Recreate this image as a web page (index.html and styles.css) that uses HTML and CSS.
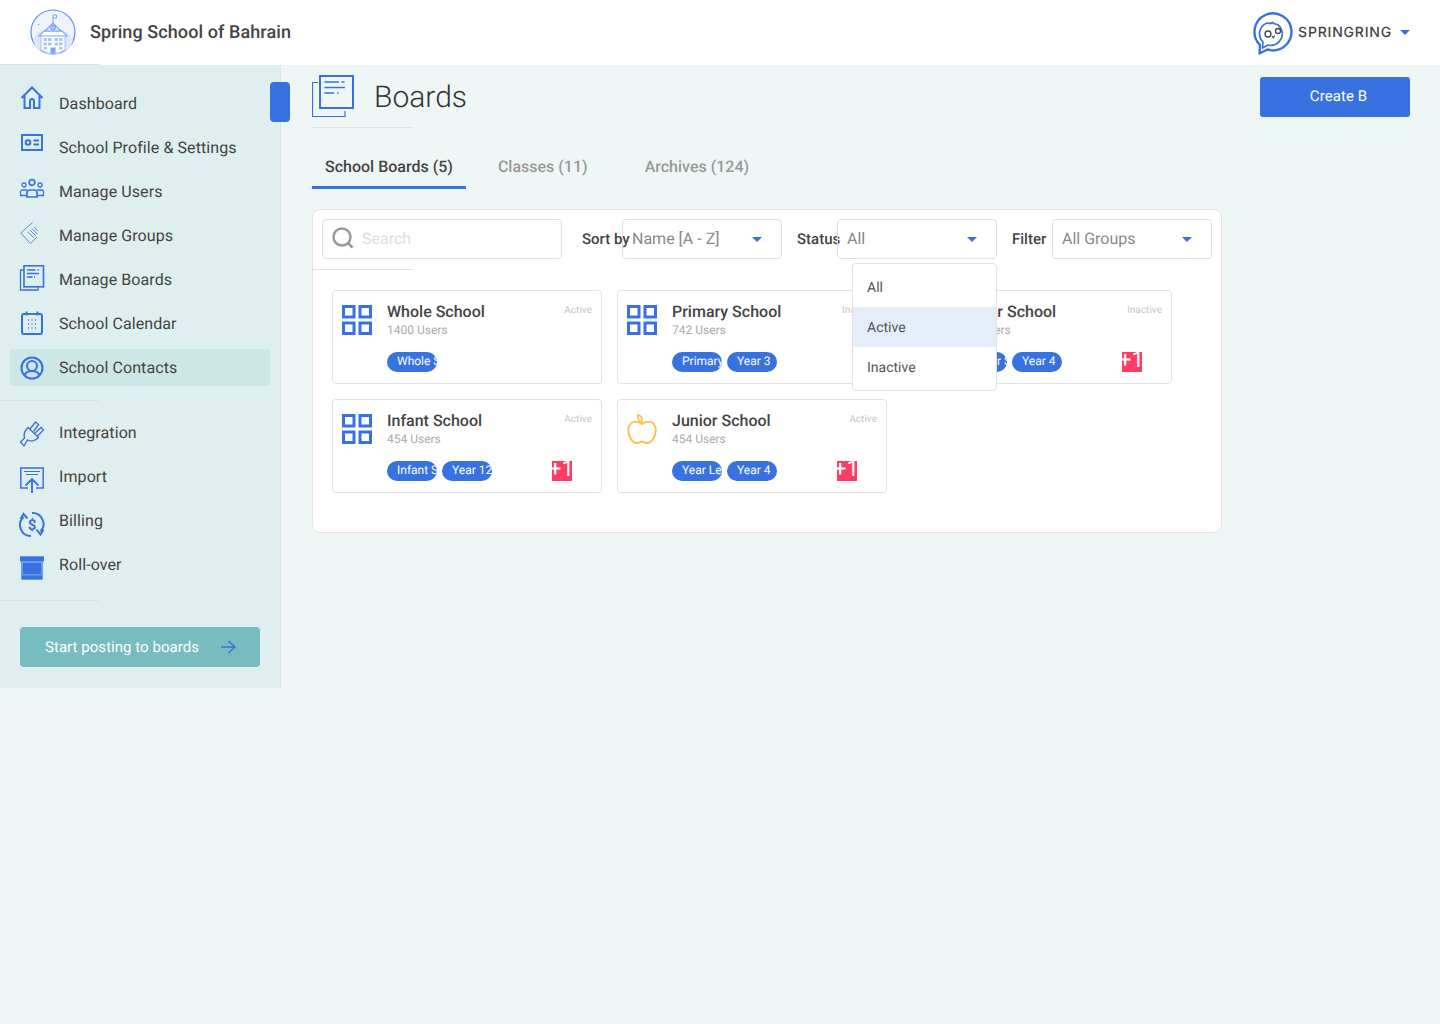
FILE: index.html
```html
<!DOCTYPE html>
<html lang="en">
<head>
<meta charset="utf-8">
<title>Boards</title>
<link rel="stylesheet" href="styles.css">
</head>
<body>
<header class="topbar">
  <div class="brand">
    <svg class="school-logo" width="46" height="46" viewBox="0 0 46 46">
      <circle cx="23" cy="23" r="22" fill="#eef3fd" stroke="#5b8dee" stroke-width="1.200"/>
      <path d="M3 31c4-9 12-12 20-12s16 3 20 12l-3 8-12 6H18L6 39z" fill="#dfe8fa"/>
      <path d="M11 26.500h24v14.500a22 22 0 0 1-24 0z" fill="#fff" stroke="#8fb2f3" stroke-width=".8"/>
      <path d="M9 27l5-5h18l5 5z" fill="#fff" stroke="#7ea5f1" stroke-width="1.200"/>
      <path d="M15 22l8-8 8 8z" fill="#dfe8fa" stroke="#7ea5f1" stroke-width="1.200"/>
      <circle cx="23" cy="18.500" r="2.500" fill="#a9c4f6" stroke="#5b8dee" stroke-width=".8"/>
      <path d="M23 14V6M23 6h3.500V9H23" fill="none" stroke="#7ea5f1"/>
      <path d="M13.500 29h3.500v3h-3.500zM18 29h3.500v3H18zM24.500 29H28v3h-3.500zM29 29h3.500v3H29zM13.500 33.500h3.500v3h-3.500zM18 33.500h3.500v3H18zM24.500 33.500H28v3h-3.500zM29 33.500h3.500v3H29zM13.500 38h3.500v2.500h-3.500zM29 38h3.500v2.500H29z" fill="#a9c4f6"/>
      <rect x="20.500" y="38.500" width="5" height="6" fill="#7ea5f1"/>
      <path d="M7 16l3-1M35 7l3-1" stroke="#a9c4f6"/>
    </svg>
    <span class="school-name">Spring School of Bahrain</span>
  </div>
  <div class="account">
    <svg width="40" height="44" viewBox="0 0 40 44" fill="none" stroke="#3871e0">
      <path d="M6.500 42.500l.5-8.500A18.500 18.500 0 1 1 14.500 38.500z" stroke-width="2.400" stroke-linejoin="round"/>
      <path d="M9.500 37l.5-6A11.500 11.500 0 0 1 14 12c3 1 4 .5 5.500-.5 1 1.500 3 1.500 5 2A11.500 11.500 0 0 1 15 34z" stroke-width="1.700" stroke-linejoin="round"/>
      <circle cx="15" cy="23" r="3" stroke="#444" stroke-width="1.300"/>
      <circle cx="25" cy="20" r="2.500" stroke="#444" stroke-width="1.300"/>
      <path d="M19 25l1.500 2 1-2.500" stroke="#444" stroke-width="1.100"/>
    </svg>
    <span class="account-name">SPRINGRING</span>
    <span class="caret"></span>
  </div>
</header>
<div class="shell">
  <aside class="sidebar">
    <span class="side-tab"></span>
    <ul class="nav">
      <li><a class="nav-item"><svg class="nav-icon" viewBox="0 0 24 44"><g transform="translate(0,5)"><path d="M1.500 12L12 1.500 22.500 12M4.500 9.500V22h5.500v-7a2 2 0 0 1 4 0v7h5.500V9.500"/></g></svg><span>Dashboard</span></a></li>
      <li><a class="nav-item"><svg class="nav-icon" viewBox="0 0 24 44"><g transform="translate(0,9)"><rect x="2" y="1" width="20" height="15"/><circle cx="8" cy="8.500" r="2.300"/><path d="M13.500 6.500H19M13.500 10.500H19"/></g></svg><span>School Profile &amp; Settings</span></a></li>
      <li><a class="nav-item"><svg class="nav-icon thin" viewBox="0 0 24 44"><g transform="translate(0,10)"><circle cx="12" cy="3.500" r="2.800" stroke-width="1.700"/><circle cx="4" cy="6" r="2"/><circle cx="20" cy="6" r="2"/><path d="M7 18v-4a3 3 0 0 1 3-3h4a3 3 0 0 1 3 3v4z" stroke-width="1.700"/><path d="M7 11H2.500A2 2 0 0 0 .5 13v3.500H7M17 11h4.500a2 2 0 0 1 2 2v3.500H17"/></g></svg><span>Manage Users</span></a></li>
      <li><a class="nav-item"><svg class="nav-icon hair" viewBox="0 0 24 44"><g transform="translate(0,9)"><path d="M12.500.5L.8 11l9.700 10.500L17 15"/><path d="M8 10l6 6M10 8l6 6M12 6.500l5.500 5.500M14 5l4 4"/></g></svg><span>Manage Groups</span></a></li>
      <li><a class="nav-item"><svg class="nav-icon thin" viewBox="0 0 24 44"><g transform="translate(0,8)"><path d="M4 5H.5v20H18v-3"/><rect x="4" y=".8" width="19.500" height="21" stroke-width="1.600"/><path d="M7 5h8.500M17.500 5h1.500M7 8.500h12M7 12h5.500M14 12h1"/></g></svg><span>Manage Boards</span></a></li>
      <li><a class="nav-item"><svg class="nav-icon" viewBox="0 0 24 44"><g transform="translate(0,10)"><rect x="2" y="3" width="20" height="20" rx="2"/><path d="M6.500.5v4M17.500.5v4"/><path class="dots" d="M8 9h1M11.500 9h1M15 9h1M8 13h1M11.500 13h1M15 13h1M8 17h1M11.500 17h1M15 17h1"/></g></svg><span>School Calendar</span></a></li>
      <li><a class="nav-item is-active"><svg class="nav-icon" viewBox="0 0 24 44"><g transform="translate(0,11)"><circle cx="12" cy="12" r="10.500"/><circle cx="12" cy="10" r="5"/><path d="M4.500 19c1.500-3 4-4 7.500-4s6 1 7.500 4"/></g></svg><span>School Contacts</span></a></li>
    </ul>
    <hr class="side-rule">
    <ul class="nav nav-lower">
      <li><a class="nav-item"><svg class="nav-icon thin" viewBox="0 0 24 44"><g transform="translate(0,11)"><path d="M8 6.500L18.500 16.500C15 20.500 10 20.500 7.500 19L4 25 .5 21 4.500 17C3 12.500 5 9.500 8 6.500z"/><path d="M10 8l5.500-7 3 2.500-5 7M14.500 12.500l6.500-6 2.500 2.500-6 6"/></g></svg><span>Integration</span></a></li>
      <li><a class="nav-item"><svg class="nav-icon thin" viewBox="0 0 24 44"><g transform="translate(0,13)"><path d="M8 21H.8V1h22.400v20H16" stroke-width="1.500"/><path d="M4 4.500h16M6 7.500h12" stroke-width="1.200"/><path d="M12 26V12M5.500 18.500L12 12l6.500 6.500" stroke-width="1.900"/></g></svg><span>Import</span></a></li>
      <li><a class="nav-item"><svg class="nav-icon" viewBox="0 0 24 44"><g transform="translate(0,14)"><path d="M11 24A11 11 0 0 1 3.500 5M.5 7l3-5 4 4.500M12 1a11 11 0 0 1 8.500 18.500M16.500 17.500l4 5 3-5"/><text x="12" y="17.500" class="dollar">$</text></g></svg><span>Billing</span></a></li>
      <li><a class="nav-item"><svg class="nav-icon flat" viewBox="0 0 24 44"><g transform="translate(0,14)"><rect width="24" height="6" fill="#6f9aea"/><rect y="1" width="24" height="4"/><rect x="1" y="6" width="22" height="18" fill="#6f9aea"/><rect x="3" y="7" width="18" height="11"/><rect x="2" y="19.500" width="20" height="3.500"/></g></svg><span>Roll-over</span></a></li>
    </ul>
    <hr class="side-rule side-rule-low">
    <a class="start-btn"><span>Start posting to boards</span><svg width="16" height="14" viewBox="0 0 16 14" fill="none" stroke="#3871e0" stroke-width="1.300"><path d="M1 7h14M8.500 1l6.500 6-6.500 6"/></svg></a>
  </aside>
  <main class="content">
    <div class="page-head">
      <div class="title-row">
        <svg width="42" height="42" viewBox="0 0 42 42" fill="none" stroke="#3871e0"><path d="M6 7.500H.5v34h32.500V36" stroke-width="1.200"/><rect x="8" y="1" width="33" height="32" stroke-width="2"/><path d="M12.500 7H27M12.500 12.500H33M12.500 18H22" stroke-width="1.500"/><path d="M29.500 7h3M25 18h1.500" stroke-width="1.500"/></svg>
        <h1>Boards</h1>
      </div>
      <a class="create-btn">Create B</a>
    </div>
    <nav class="tabs">
      <a class="tab is-current">School Boards (5)</a>
      <a class="tab tab-muted">Classes (11)</a>
      <a class="tab tab-muted">Archives (124)</a>
    </nav>
    <section class="panel">
      <div class="toolbar">
        <div class="search">
          <svg width="22" height="22" viewBox="0 0 22 22" fill="none" stroke="#999" stroke-width="2.500"><circle cx="10" cy="10" r="8.500"/><path d="M16 16l4.500 4.500"/></svg>
          <span>Search</span>
        </div>
        <span class="tool-label">Sort by</span>
        <div class="select"><span>Name [A - Z]</span><i class="caret"></i></div>
        <span class="tool-label">Status</span>
        <div class="select"><span>All</span><i class="caret"></i></div>
        <span class="tool-label">Filter</span>
        <div class="select"><span>All Groups</span><i class="caret"></i></div>
      </div>
      <hr class="panel-rule">
      <div class="cards">
        <article class="card">
          <svg class="grid-icon" viewBox="0 0 30 30"><rect x="1.500" y="1.500" width="10.500" height="10.500"/><rect x="18" y="1.500" width="10.500" height="10.500"/><rect x="1.500" y="18" width="10.500" height="10.500"/><rect x="18" y="18" width="10.500" height="10.500"/></svg>
          <div class="card-body">
            <div class="card-top"><h3>Whole School</h3><span class="status">Active</span></div>
            <p class="users">1400 Users</p>
            <div class="chips"><span class="chip">Whole School</span></div>
          </div>
        </article>
        <article class="card">
          <svg class="grid-icon" viewBox="0 0 30 30"><rect x="1.500" y="1.500" width="10.500" height="10.500"/><rect x="18" y="1.500" width="10.500" height="10.500"/><rect x="1.500" y="18" width="10.500" height="10.500"/><rect x="18" y="18" width="10.500" height="10.500"/></svg>
          <div class="card-body">
            <div class="card-top"><h3>Primary School</h3><span class="status">Inactive</span></div>
            <p class="users">742 Users</p>
            <div class="chips"><span class="chip">Primary School</span><span class="chip">Year 3</span></div>
          </div>
        </article>
        <article class="card">
          <svg class="grid-icon" viewBox="0 0 30 30"><rect x="1.500" y="1.500" width="10.500" height="10.500"/><rect x="18" y="1.500" width="10.500" height="10.500"/><rect x="1.500" y="18" width="10.500" height="10.500"/><rect x="18" y="18" width="10.500" height="10.500"/></svg>
          <div class="card-body">
            <div class="card-top"><h3>Senior School</h3><span class="status">Inactive</span></div>
            <p class="users">454 Users</p>
            <div class="chips"><span class="chip">Senior School</span><span class="chip">Year 4</span><span class="more">+1</span></div>
          </div>
        </article>
        <article class="card">
          <svg class="grid-icon" viewBox="0 0 30 30"><rect x="1.500" y="1.500" width="10.500" height="10.500"/><rect x="18" y="1.500" width="10.500" height="10.500"/><rect x="1.500" y="18" width="10.500" height="10.500"/><rect x="18" y="18" width="10.500" height="10.500"/></svg>
          <div class="card-body">
            <div class="card-top"><h3>Infant School</h3><span class="status">Active</span></div>
            <p class="users">454 Users</p>
            <div class="chips"><span class="chip">Infant School</span><span class="chip">Year 12</span><span class="more">+1</span></div>
          </div>
        </article>
        <article class="card">
          <svg class="apple-icon" viewBox="0 0 30 30" fill="none" stroke="#fdc050" stroke-width="2"><path d="M15 10C11 6.500 3 6.500 1.500 14 .5 21 5 30 11 29c2-.5 3-1.500 4-1.500s2 1 4 1.500c6 1 10.500-8 9.500-15C27 6.500 19 6.500 15 10z"/><path d="M15 8.500C11.500 7 10.500 4 11 1c3 .5 4.500 3.500 4 7.500z" stroke-width="1.600"/></svg>
          <div class="card-body">
            <div class="card-top"><h3>Junior School</h3><span class="status">Active</span></div>
            <p class="users">454 Users</p>
            <div class="chips"><span class="chip">Year Level</span><span class="chip">Year 4</span><span class="more">+1</span></div>
          </div>
        </article>
      </div>
      <ul class="dropdown">
        <li>All</li>
        <li class="is-hover">Active</li>
        <li>Inactive</li>
      </ul>
    </section>
  </main>
</div>
</body>
</html>
```
FILE: styles.css
```css
* { box-sizing: border-box; }
html, body { margin: 0; padding: 0; }
body {
  min-height: 1024px;
  background: #eff7f6;
  font-family: Roboto, "Liberation Sans", sans-serif;
  color: #444;
  text-rendering: geometricPrecision;
}
a { display: block; }
ul { list-style: none; margin: 0; padding: 0; }
h1, h3, p { margin: 0; }

.topbar {
  height: 65px;
  background: #fff;
  display: flex;
  justify-content: space-between;
  align-items: center;
  padding: 0 30px;
  position: relative;
}
.topbar::after {
  content: "";
  position: absolute;
  left: 0;
  bottom: 0;
  width: 100px;
  height: 1px;
  background: #e2e2e2;
}
.brand { display: flex; align-items: center; gap: 14px; }
.school-logo { display: block; margin-top: -1px; }
.school-name { font-size: 18px; font-weight: 500; letter-spacing: .09px; color: #444; line-height: 22px; }
.account { display: flex; align-items: center; }
.account svg { margin: 0 5px 0 0; display: block; }
.account-name { font-family: Inter, Roboto, sans-serif; font-size: 14px; font-weight: 500; letter-spacing: .8px; color: #444; }
.caret {
  display: inline-block;
  width: 0;
  height: 0;
  border-left: 5.500px solid transparent;
  border-right: 5.500px solid transparent;
  border-top: 5px solid #3871e0;
}
.account .caret { margin-left: 8px; }

.shell { display: flex; align-items: flex-start; }
.sidebar {
  width: 281px;
  flex: none;
  height: 623px;
  background: #dfeeee;
  border-right: 1px solid #e2e0e2;
  padding-top: 16px;
  position: relative;
}
.side-tab {
  position: absolute;
  left: 270px;
  top: 17px;
  width: 20px;
  height: 40px;
  background: #3871e0;
  border-radius: 4px;
}
.nav { display: flex; flex-direction: column; }
.nav-item {
  display: flex;
  align-items: center;
  height: 37px;
  margin: 4px 10px 3px;
  padding-left: 10px;
  gap: 15px;
  border-radius: 4px;
  font-size: 16px;
  letter-spacing: .09px;
  color: #444;
}
.nav-item.is-active { background: #cde6e6; }
.nav-icon {
  width: 24px;
  height: 44px;
  margin: -4px 0 -3px;
  flex: none;
  fill: none;
  stroke: #3871e0;
  stroke-width: 2;
  overflow: visible;
}
.nav-icon.thin { stroke-width: 1.300; }
.nav-icon.hair { stroke-width: .8; }
.nav-icon.flat { fill: #3871e0; stroke: none; }
.nav-icon .dots { stroke-width: 1.600; }
.dollar { font-size: 15px; font-weight: 700; text-anchor: middle; fill: #3871e0; stroke: none; font-family: Roboto, sans-serif; }
.side-rule {
  width: 100px;
  height: 1px;
  margin: 11px 0 9px;
  border: 0;
  background: #e4dfe0;
}
.side-rule-low { margin: 14px 0 26px; }
.start-btn {
  display: flex;
  align-items: center;
  justify-content: space-between;
  width: 240px;
  height: 40px;
  margin-left: 20px;
  padding: 0 24px 0 25px;
  background: #79bcc0;
  border-radius: 4px;
  color: #fff;
  font-size: 15px;
  letter-spacing: .04px;
}

.content { flex: 1; padding: 0 30px 0 31px; }
.page-head {
  display: flex;
  justify-content: space-between;
  align-items: flex-start;
  height: 63px;
  padding-top: 10px;
  position: relative;
}
.page-head::after {
  content: "";
  position: absolute;
  left: 0;
  bottom: 0;
  width: 100px;
  height: 1px;
  background: #e0e3e3;
}
.title-row { display: flex; align-items: center; gap: 20px; height: 42px; }
.title-row svg { display: block; }
.title-row h1 { font-size: 30px; font-weight: 300; color: #333; line-height: 44px; padding-top: 4px; }
.create-btn {
  width: 150px;
  height: 40px;
  margin-top: 2px;
  padding-left: 7px;
  background: #3871e0;
  border-radius: 3px;
  color: #fff;
  font-size: 15px;
  font-weight: 400;
  letter-spacing: .08px;
  line-height: 38px;
  text-align: center;
}

.tabs { display: flex; margin: 21px 0 20px; }
.tab {
  height: 40px;
  padding: 0 13px;
  font-size: 16px;
  font-weight: 500;
  line-height: 36px;
  border-bottom: 3px solid transparent;
}
.tab.is-current { border-bottom-color: #3871e0; color: #444; }
.tab-muted { color: #999; margin-left: 7px; padding: 0 25px; }

.panel {
  position: relative;
  width: 910px;
  height: 324px;
  padding: 9px;
  background: #fff;
  border: 1px solid #e2e2e2;
  border-radius: 8px;
}
.toolbar { display: flex; align-items: center; height: 40px; }
.search {
  display: flex;
  align-items: center;
  gap: 8px;
  width: 240px;
  height: 40px;
  padding: 0 0 2px 9px;
  border: 1px solid #e0e0e0;
  border-radius: 4px;
  font-size: 16px;
  color: #ddd;
  margin-right: 20px;
}
.tool-label {
  width: 40px;
  font-size: 15px;
  font-weight: 500;
  white-space: nowrap;
}
.select {
  display: flex;
  align-items: center;
  justify-content: space-between;
  width: 160px;
  height: 40px;
  margin-right: 15px;
  padding: 0 19px 0 9px;
  border: 1px solid #e0e0e0;
  border-radius: 4px;
  font-size: 16px;
  color: #888;
}
.select span { margin-bottom: 2px; }
.select:last-child { margin-right: 0; }
.panel-rule {
  width: 100px;
  height: 1px;
  margin: 10px 0 20px -9px;
  border: 0;
  background: #e2e2e2;
}
.cards {
  display: grid;
  grid-template-columns: repeat(3, 270px);
  grid-auto-rows: 94px;
  gap: 15px;
  margin-left: 10px;
}
.card {
  display: flex;
  gap: 15px;
  padding: 10px 9px;
  background: #fff;
  border: 1px solid #e2e2e2;
  border-radius: 4px;
}
.grid-icon, .apple-icon { width: 30px; height: 30px; margin-top: 4px; flex: none; display: block; }
.grid-icon { fill: none; stroke: #3871e0; stroke-width: 3; }
.card-body { flex: 1; min-width: 0; }
.card-top { display: flex; justify-content: space-between; height: 20px; }
.card-top h3 { font-size: 16px; font-weight: 500; line-height: 22px; color: #444; }
.status { font-size: 10px; line-height: 20px; color: #c4c4c4; letter-spacing: .03px; }
.users { margin-top: 1px; font-size: 12px; line-height: 16px; color: #aaa; }
.chips { display: flex; gap: 5px; margin-top: 14px; padding-right: 20px; }
.chip {
  width: 50px;
  height: 20px;
  padding-left: 10px;
  overflow: hidden;
  white-space: nowrap;
  background: #3871e0;
  border-radius: 10px;
  color: #fff;
  font-size: 12px;
  line-height: 18px;
}
.more {
  width: 20px;
  height: 20px;
  margin-left: auto;
  overflow: hidden;
  background: #ff3b66;
  color: #fff;
  font-size: 22px;
  line-height: 18px;
  text-indent: -3px;
  white-space: nowrap;
}
.dropdown {
  position: absolute;
  left: 539px;
  top: 53px;
  width: 145px;
  height: 128px;
  padding: 3px 0;
  background: #fff;
  border: 1px solid #e2e2e2;
  border-radius: 4px;
  font-size: 14px;
  color: #555;
}
.dropdown li { height: 40px; padding-left: 14px; line-height: 42px; }
.dropdown .is-hover { background: #e5ecfa; }
```
